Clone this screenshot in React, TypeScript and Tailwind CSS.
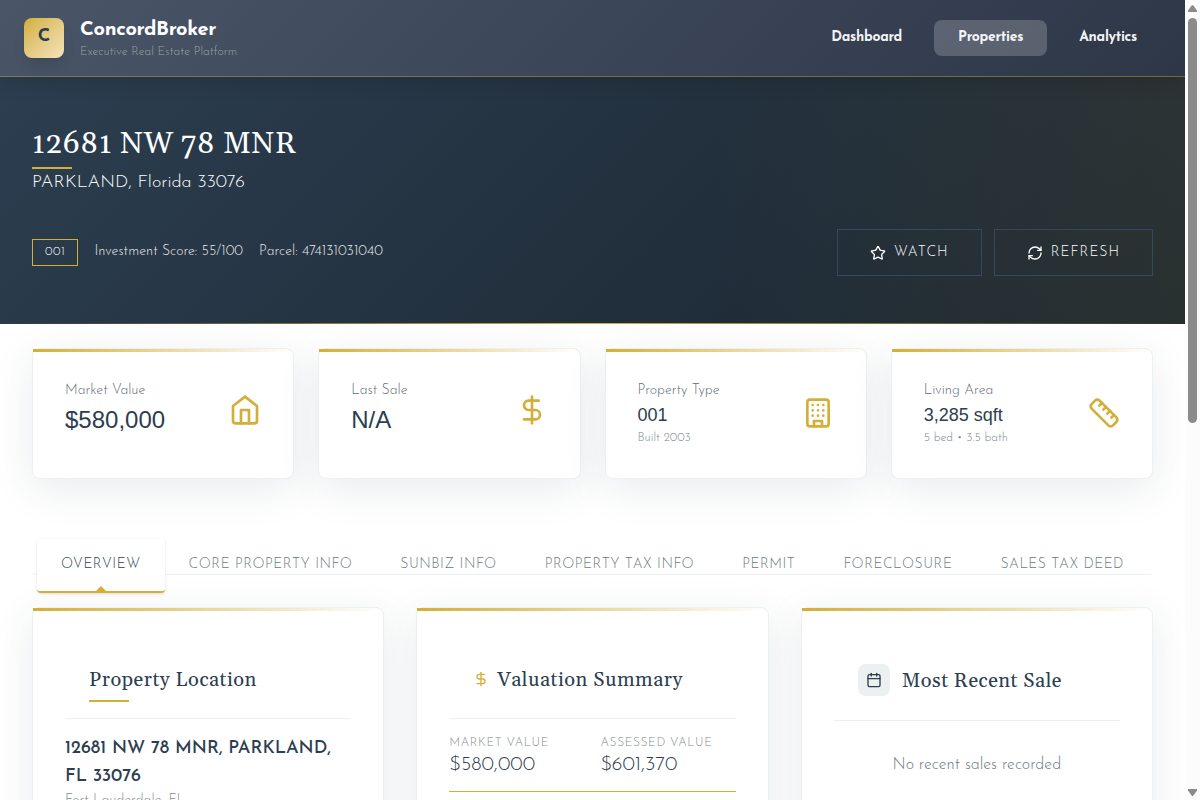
import type { ReactNode } from "react";
import { Calendar, DollarSign, RefreshCw, Ruler, Star } from "lucide-react";

const stroke = {
  viewBox: "0 0 24 24",
  fill: "none",
  stroke: "currentColor",
  strokeWidth: 2,
  strokeLinecap: "round" as const,
  strokeLinejoin: "round" as const,
};

function HomeIcon({ className }: { className?: string }) {
  return (
    <svg {...stroke} className={className}>
      <path d="m3 9 9-7 9 7v11a2 2 0 0 1-2 2H5a2 2 0 0 1-2-2z" />
      <polyline points="9 22 9 12 15 12 15 22" />
    </svg>
  );
}

function BuildingIcon({ className }: { className?: string }) {
  return (
    <svg {...stroke} className={className}>
      <rect width="16" height="20" x="4" y="2" rx="2" ry="2" />
      <path d="M9 22v-4h6v4M8 6h.01M16 6h.01M12 6h.01M12 10h.01M12 14h.01M16 10h.01M16 14h.01M8 10h.01M8 14h.01" />
    </svg>
  );
}

const serif = "font-['Gelasio','Georgia','Liberation_Serif',serif]";

function Header() {
  return (
    <header className="relative z-10 flex h-[77px] shrink-0 items-center justify-between border-b border-[#d4af37]/40 bg-linear-135 from-[#4a5568] to-[#2d3748] px-6 shadow-[0_4px_20px_rgba(0,0,0,0.15)]">
      <div className="flex items-center gap-4">
        <div className="flex size-10 items-center justify-center rounded-lg bg-linear-135 from-[#d4af37] to-[#f4e4bc] text-lg font-bold text-[#2c3e50] shadow-lg">
          <span className="pb-0.5">C</span>
        </div>
        <div>
          <h1 className="text-xl leading-7 font-bold tracking-[-0.35px] text-white">ConcordBroker</h1>
          <p className="text-xs leading-4 font-light text-[#95a5a6]">Executive Real Estate Platform</p>
        </div>
      </div>
      <nav className="flex gap-2 text-sm leading-5 font-bold tracking-[-0.3px] text-white/95">
        <a className="rounded-lg px-6 py-2">Dashboard</a>
        <a className="rounded-lg bg-white/20 px-6 py-2">Properties</a>
        <a className="rounded-lg px-6 py-2">Analytics</a>
      </nav>
    </header>
  );
}

function HeroButton({ icon, children }: { icon: ReactNode; children: ReactNode }) {
  return (
    <button className="flex h-[47px] items-center gap-2 border border-[#34495e] px-8 text-sm leading-5 font-light tracking-[1px] text-white">
      {icon}
      <span>{children}</span>
    </button>
  );
}

function Hero() {
  return (
    <section className="relative h-[247px] shrink-0 bg-linear-135 from-[#2c3e50] to-[#1a252f] text-white">
      <div className="absolute inset-y-0 right-0 w-2/5 bg-linear-90 from-transparent to-[#d4af37]/8" />
      <div className="absolute inset-x-0 bottom-0 h-px bg-linear-90 from-transparent via-[#d4af37] to-transparent" />
      <div className="relative px-8 pt-12">
        <h2 className={`${serif} relative text-[30px] leading-9 font-normal tracking-[0.55px]`}>
          <span className="relative top-px">12681 NW 78 MNR</span>
          <span className="absolute -bottom-2 left-0 h-0.5 w-10 bg-[#d4af37]" />
        </h2>
        <p className="mt-2 text-lg leading-7 font-light">PARKLAND, Florida 33076</p>
        <div className="mt-8 flex items-center justify-between">
          <div className="flex items-center gap-4 text-sm leading-5 font-light">
            <span className="flex h-[27px] items-center border border-[#d4af37] px-3 pb-0.5 text-xs leading-4 font-light tracking-[0.6px]">001</span>
            <span className="pb-0.5 opacity-90">Investment Score: 55/100</span>
            <span className="pb-0.5 opacity-90">Parcel: 474131031040</span>
          </div>
          <div className="flex gap-3">
            <HeroButton icon={<Star className="size-4" />}>WATCH</HeroButton>
            <HeroButton icon={<RefreshCw className="size-4" />}>REFRESH</HeroButton>
          </div>
        </div>
      </div>
    </section>
  );
}

function Card({ className, children }: { className?: string; children: ReactNode }) {
  return (
    <div className={`relative rounded-lg border border-[#ecf0f1] bg-white p-8 shadow-[0_10px_40px_rgba(44,62,80,0.1)] ${className ?? ""}`}>
      <div className="absolute inset-x-0 top-0 h-[3px] bg-linear-90 from-[#d4af37] to-transparent" />
      {children}
    </div>
  );
}

type StatProps = { label: string; value: string; note?: string; icon: ReactNode };

function Stat({ label, value, note, icon }: StatProps) {
  return (
    <Card className="h-[131px]">
      <div className="flex items-center justify-between">
        <div>
          <p className="text-sm leading-5 font-light text-[#5f6b75]">{label}</p>
          <p className={`font-['Liberation_Sans',Arial,sans-serif] text-[#2c3e50] ${note ? "text-lg leading-[1.6]" : "text-2xl leading-[1.6]"}`}>{value}</p>
          {note && <p className="text-xs leading-4 font-light text-[#7b878c]">{note}</p>}
        </div>
        <div className="text-[#d4af37]">{icon}</div>
      </div>
    </Card>
  );
}

const tabs = ["CORE PROPERTY INFO", "SUNBIZ INFO", "PROPERTY TAX INFO", "PERMIT", "FORECLOSURE", "SALES TAX DEED"];

function Tabs() {
  return (
    <div className="relative z-10 mt-[56px] flex h-10 items-center justify-center rounded border-b border-[#ecf0f1] text-sm leading-5 font-light tracking-[0.5px] text-[#6c787c]">
      <div className="relative mt-[23px] h-[54px] rounded border-b-2 border-[#d4af37] bg-white px-6 pt-4 text-[#2c3e50] shadow-[0_1px_3px_rgba(0,0,0,0.12)]">
        OVERVIEW
        <svg viewBox="0 0 10 5" className="absolute bottom-0 left-1/2 h-[5px] w-2.5 -translate-x-1/2 fill-[#d4af37]">
          <path d="M5 0 10 5H0z" />
        </svg>
      </div>
      {tabs.map((t) => (
        <div key={t} className="px-6 pt-[21px]">
          {t}
        </div>
      ))}
    </div>
  );
}

const titleClass = `${serif} text-xl leading-[30px] font-normal tracking-[0.5px] text-[#2c3e50]`;

function PanelHead({ children }: { children: ReactNode }) {
  return <div className="flex items-center border-b border-[#ecf0f1] p-6">{children}</div>;
}

function Amount({ label, value }: { label: string; value: string }) {
  return (
    <div>
      <p className="text-xs leading-4 font-light tracking-[0.6px] text-[#7f8c8d]">{label}</p>
      <p className="text-xl leading-7 font-light text-[#2c3e50]">{value}</p>
    </div>
  );
}

function Panels() {
  return (
    <div className="mt-8 grid grid-cols-3 gap-8">
      <Card className="h-80">
        <PanelHead>
          <h3 className={`${titleClass} relative`}>
            <span className="relative top-px">Property Location</span>
            <span className="absolute -bottom-2 left-0 h-0.5 w-10 bg-[#d4af37]" />
          </h3>
        </PanelHead>
        <p className="pt-4 text-lg leading-7 font-medium text-[#2c3e50]">12681 NW 78 MNR, PARKLAND, FL 33076</p>
        <p className="text-sm leading-5 font-light text-[#7f8c8d]">Fort Lauderdale, FL</p>
      </Card>
      <Card className="h-80">
        <PanelHead>
          <DollarSign className="mr-2 size-4 text-[#d4af37]" />
          <h3 className={`${titleClass} relative top-px`}>Valuation Summary</h3>
        </PanelHead>
        <div className="grid grid-cols-2 gap-4 border-b border-[#d4af37] pt-4 pb-3">
          <Amount label="MARKET VALUE" value="$580,000" />
          <Amount label="ASSESSED VALUE" value="$601,370" />
        </div>
      </Card>
      <Card className="h-80">
        <PanelHead>
          <div className="mr-3 flex size-8 items-center justify-center rounded-lg bg-[#ecf0f1] text-[#2c3e50]">
            <Calendar className="size-4" />
          </div>
          <h3 className={`${titleClass} relative top-px`}>Most Recent Sale</h3>
        </PanelHead>
        <p className="py-8 text-center text-base leading-6 font-light text-[#6c787c]">No recent sales recorded</p>
      </Card>
    </div>
  );
}

function Scrollbar() {
  return (
    <div className="flex h-full w-[15px] shrink-0 flex-col items-center bg-[#fcfcfc] text-[#8b8b8b]">
      <svg viewBox="0 0 9 7" className="mt-[5px] h-[7px] w-[9px] fill-current">
        <path d="M3.6.6Q4.500-.4 5.400.6L9 5.500V7H0V5.500z" />
      </svg>
      <div className="mt-1.5 h-[405px] w-[9px] rounded-full bg-current" />
      <svg viewBox="0 0 9 7" className="mt-auto mb-1 h-[7px] w-[9px] rotate-180 fill-current">
        <path d="M3.6.6Q4.500-.4 5.400.6L9 5.500V7H0V5.500z" />
      </svg>
    </div>
  );
}

export default function App() {
  return (
    <div className="flex h-[800px] w-[1200px] overflow-hidden bg-white font-['Josefin_Sans','Lato',sans-serif]">
      <div className="flex h-full w-[1185px] flex-col overflow-hidden">
        <Header />
        <Hero />
        <main className="px-8 pt-6">
          <div className="grid grid-cols-4 gap-6">
            <Stat label="Market Value" value="$580,000" icon={<HomeIcon className="size-8" />} />
            <Stat label="Last Sale" value="N/A" icon={<DollarSign className="size-8" />} />
            <Stat label="Property Type" value="001" note="Built 2003" icon={<BuildingIcon className="size-8" />} />
            <Stat label="Living Area" value="3,285 sqft" note="5 bed • 3.5 bath" icon={<Ruler className="size-8" />} />
          </div>
          <Tabs />
          <Panels />
        </main>
      </div>
      <Scrollbar />
    </div>
  );
}
